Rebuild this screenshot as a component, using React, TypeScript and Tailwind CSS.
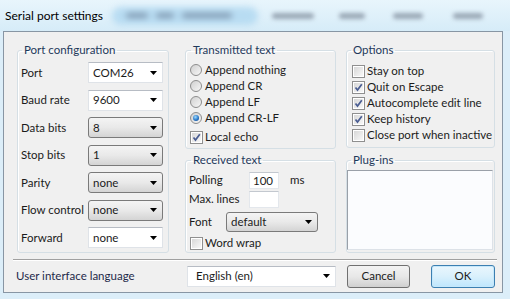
import React from "react";

const Arrow = () => (
  <svg width="7" height="4" viewBox="0 0 7 4" className="shrink-0">
    <path d="M0 0h7L3.5 4z" fill="#000" />
  </svg>
);

const WhiteCombo = ({ value, className }: { value: string; className: string }) => (
  <div
    className={
      "flex items-center justify-between bg-white border border-[#dfe3e8] border-t-[#b7bcc4] pl-[4px] pr-[5px] " +
      className
    }
  >
    <span>{value}</span>
    <Arrow />
  </div>
);

const GrayCombo = ({ value, className }: { value: string; className: string }) => (
  <div
    className={
      "flex items-center justify-between rounded-[3px] border border-[#7a7a7a] bg-gradient-to-b from-[#f4f4f4] via-[#e9e9e9] to-[#d4d4d4] pl-[4px] pr-[5px] " +
      className
    }
  >
    <span>{value}</span>
    <Arrow />
  </div>
);

const Radio = ({ checked }: { checked?: boolean }) => (
  <div className="w-[12px] h-[12px] rounded-full border border-[#8d8d8d] bg-gradient-to-br from-[#d0d0d0] to-[#f7f7f7] flex items-center justify-center shrink-0">
    {checked && (
      <div className="w-[6px] h-[6px] rounded-full bg-[radial-gradient(circle_at_40%_35%,#9fdcff,#2a78c8_55%,#0d3f80)]" />
    )}
  </div>
);

const Check = ({ checked }: { checked?: boolean }) => (
  <div className="w-[13px] h-[13px] border border-[#8f8f8f] bg-white p-px shrink-0">
    <div className="w-full h-full bg-gradient-to-br from-[#d8d8d8] to-[#f8f8f8] flex items-center justify-center">
      {checked && (
        <svg width="9" height="9" viewBox="0 0 9 9">
          <path d="M1.5 4.5L3.5 7L7.8 1.2" stroke="#4a5d92" strokeWidth="1.7" fill="none" />
        </svg>
      )}
    </div>
  </div>
);

const Legend = ({ children, ml }: { children: React.ReactNode; ml: string }) => (
  <legend className={"px-[2px] leading-[14px] text-[#1e395b] " + ml}>{children}</legend>
);

const fs = "border border-[#d5dfe5] rounded-[3px] shadow-[inset_1px_1px_0_#fff]";

export default function App() {
  const leftRows: [string, string, boolean][] = [
    ["Port", "COM26", true],
    ["Baud rate", "9600", true],
    ["Data bits", "8", false],
    ["Stop bits", "1", false],
    ["Parity", "none", false],
    ["Flow control", "none", false],
    ["Forward", "none", true],
  ];
  return (
    <div className="w-[510px] h-[299px] overflow-hidden whitespace-nowrap bg-[#dceef9] font-['Lato',sans-serif] text-[11.5px] text-[#1b1b1b] flex flex-col">
      {/* Title bar */}
      <div className="h-[31px] shrink-0 flex items-center pl-[5px] bg-gradient-to-b from-[#e8f5fc] to-[#d6ecf8] overflow-hidden">
        <span className="text-black text-[12px] w-[103px] shrink-0">Serial port settings</span>
        <div className="ml-[4px] w-[146px] h-[18px] rounded-full bg-[#b8dcf2] blur-[3px] flex items-center pl-[14px] gap-[8px]">
          <div className="w-[22px] h-[5px] bg-[#7d95ad] rounded-full" />
          <div className="w-[18px] h-[5px] bg-[#7d95ad] rounded-full" />
          <div className="w-[50px] h-[5px] bg-[#7d95ad] rounded-full" />
        </div>
        <div className="ml-[14px] w-[42px] h-[6px] bg-[#9aa8b6] rounded-full blur-[2px]" />
        <div className="ml-[25px] w-[26px] h-[6px] bg-[#9aa8b6] rounded-full blur-[2px]" />
        <div className="ml-[28px] w-[30px] h-[6px] bg-[#9aa8b6] rounded-full blur-[2px]" />
        <div className="ml-[30px] w-[30px] h-[6px] bg-[#9aa8b6] rounded-full blur-[2px]" />
      </div>

      {/* Client area */}
      <div className="ml-[3px] w-[500px] h-[262px] shrink-0 border border-[#8896a4] bg-[#f0f0f0] flex flex-col">
        <div className="flex pl-[13px] pt-[11px]">
          {/* Port configuration */}
          <fieldset className={fs + " w-[152px] h-[210px]"}>
            <Legend ml="ml-[4px]">Port configuration</Legend>
            <div className="pt-[5px] pl-[3px] flex flex-col gap-[6.5px]">
              {leftRows.map(([label, value, white]) => (
                <div key={label} className="flex items-center h-[21px]">
                  <span className="w-[67px]">{label}</span>
                  {white ? (
                    <WhiteCombo value={value} className="w-[75px] h-[21px]" />
                  ) : (
                    <GrayCombo value={value} className="w-[75px] h-[21px]" />
                  )}
                </div>
              ))}
            </div>
          </fieldset>

          {/* Middle column */}
          <div className="ml-[16px] w-[151px] flex flex-col gap-[4px]">
            <fieldset className={fs + " h-[106px]"}>
              <Legend ml="ml-[5px]">Transmitted text</Legend>
              <div className="pt-[5px] pl-[4px] flex flex-col">
                {["Append nothing", "Append CR", "Append LF", "Append CR-LF"].map((t, i) => (
                  <div key={t} className="flex items-center h-[16px] gap-[3px]">
                    <Radio checked={i === 3} />
                    <span>{t}</span>
                  </div>
                ))}
                <div className="flex items-center h-[16px] gap-[2px] mt-[3px]">
                  <Check checked />
                  <span>Local echo</span>
                </div>
              </div>
            </fieldset>
            <fieldset className={fs + " h-[100px]"}>
              <Legend ml="ml-[5px]">Received text</Legend>
              <div className="pt-[4px] pl-[3px] flex flex-col">
                <div className="flex items-center h-[18px]">
                  <span className="w-[60px]">Polling</span>
                  <div className="w-[30px] h-[17px] bg-white border border-[#e3e7ec] border-t-[#c3c8cf] pl-[3px] leading-[15px]">
                    100
                  </div>
                  <span className="ml-[11px]">ms</span>
                </div>
                <div className="flex items-center h-[18px] mt-[1px]">
                  <span className="w-[60px]">Max. lines</span>
                  <div className="w-[30px] h-[17px] bg-white border border-[#e3e7ec] border-t-[#c3c8cf]" />
                </div>
                <div className="flex items-center h-[20px] mt-[4px]">
                  <span className="w-[37px]">Font</span>
                  <GrayCombo value="default" className="w-[92px] h-[20px]" />
                </div>
                <div className="flex items-center h-[16px] gap-[2px] mt-[3px] pl-[1px]">
                  <Check />
                  <span>Word wrap</span>
                </div>
              </div>
            </fieldset>
          </div>

          {/* Right column */}
          <div className="ml-[10px] w-[149px] flex flex-col gap-[5px]">
            <fieldset className={fs + " h-[105px]"}>
              <Legend ml="ml-[4px]">Options</Legend>
              <div className="pt-[6px] pl-[5px] flex flex-col">
                {[
                  ["Stay on top", false],
                  ["Quit on Escape", true],
                  ["Autocomplete edit line", true],
                  ["Keep history", true],
                  ["Close port when inactive", false],
                ].map(([t, c]) => (
                  <div key={t as string} className="flex items-center h-[16px] gap-[2px]">
                    <Check checked={c as boolean} />
                    <span>{t as string}</span>
                  </div>
                ))}
              </div>
            </fieldset>
            <fieldset className={fs + " h-[100px]"}>
              <Legend ml="ml-[4px]">Plug-ins</Legend>
              <div className="pt-[3px]">
                <div className="w-[146px] h-[80px] bg-[#fbfcfe] border border-[#dde2e8] border-t-[#9aa0a8] border-l-[#9aa0a8]" />
              </div>
            </fieldset>
          </div>
        </div>

        {/* Separator */}
        <div className="mt-[6px] ml-[9px] w-[484px] h-[2px] border-t border-t-[#a0a0a0] border-b border-b-white" />

        {/* Bottom row */}
        <div className="mt-[4px] h-[22px] flex items-center pl-[12px]">
          <span className="w-[171px] text-[#1e2a4a]">User interface language</span>
          <WhiteCombo value="English (en)" className="w-[149px] h-[21px] pl-[8px]" />
          <div className="ml-[11px] w-[63px] h-[23px] rounded-[3px] border border-[#707070] bg-gradient-to-b from-[#f3f3f3] via-[#e8e8e8] to-[#d0d0d0] flex items-center justify-center">
            Cancel
          </div>
          <div className="ml-[21px] w-[64px] h-[23px] rounded-[3px] border border-[#3c7fb1] bg-gradient-to-b from-[#eaf6fd] via-[#d9f0fc] to-[#bee6fd] shadow-[inset_0_0_0_1px_#c6e8fb] flex items-center justify-center">
            OK
          </div>
        </div>
      </div>
    </div>
  );
}
